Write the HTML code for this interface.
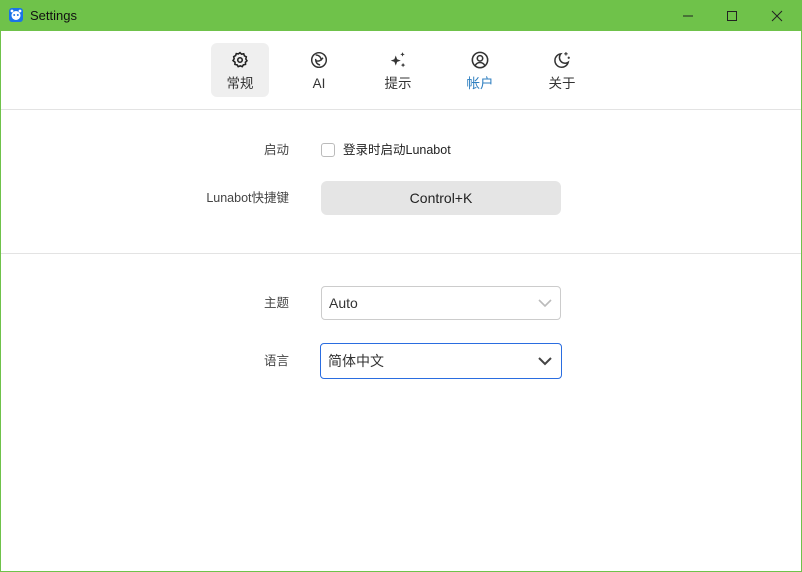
<!DOCTYPE html>
<html><head><meta charset="utf-8"><style>
*{margin:0;padding:0;box-sizing:border-box}
body{width:802px;height:572px;overflow:hidden;background:#6fc24a;font-family:"Liberation Sans","Noto Sans CJK SC",sans-serif;position:relative}
.win{position:absolute;left:1px;top:31px;width:800px;height:540px;background:#fff}
.title{position:absolute;left:30px;top:8px;font-size:13px;color:#111}
.abs{position:absolute}
.tab{position:absolute;top:43px;width:58px;height:54px;text-align:center;font-size:13.5px;color:#333}
.tab svg{position:absolute;left:50%;top:8px;margin-left:-9px}
.tab span{position:absolute;left:0;right:0;top:32px;line-height:18px;height:18px}
.lbl{position:absolute;right:513px;font-size:12.5px;color:#444;line-height:14px}
.hr{position:absolute;left:1px;width:800px;height:1px;background:#e3e3e3}
</style></head><body>
<svg class="abs" style="left:9px;top:8px" width="14" height="14" viewBox="0 0 14 14"><rect width="14" height="14" rx="3" fill="#1a73e8"/><circle cx="7" cy="7.5" r="4.5" fill="#fff"/><circle cx="5.2" cy="7" r="1" fill="#1a73e8"/><circle cx="8.8" cy="7" r="1" fill="#1a73e8"/><circle cx="3" cy="3" r="1.4" fill="#fff"/><circle cx="11" cy="3" r="1.4" fill="#fff"/></svg>
<div class="title">Settings</div>
<svg class="abs" style="left:680px;top:10px" width="110" height="12"><line x1="3" y1="6" x2="13" y2="6" stroke="#222"/><rect x="47.5" y="1.5" width="9" height="9" fill="none" stroke="#222"/><path d="M92 1L102 11M102 1L92 11" stroke="#222"/></svg>
<div class="win"></div>
<div class="tab" style="left:211px;background:#efefef;border-radius:6px"><svg width="18" height="18" viewBox="0 0 16 16" fill="none" stroke="#222" stroke-width="1.4"><path d="M8 1.5l1.4 1.3 1.9-.3.6 1.8 1.7.9-.4 1.9 1 1.6-1.4 1.3.1 1.9-1.9.4-1 1.6-1.8-.7-1.8.7-1-1.6-1.9-.4.1-1.9L1.8 8.5l1-1.6-.4-1.9 1.7-.9.6-1.8 1.9.3z"/><circle cx="8" cy="8" r="2"/></svg><span>常规</span></div>
<div class="tab" style="left:290px"><svg width="18" height="18" viewBox="0 0 16 16" fill="none" stroke="#333" stroke-width="1.3"><circle cx="8" cy="8" r="6.5"/><path d="M5 3.5c3 0 5 2 5 5M11.5 6c-1.5 2.5-4 3.5-6.5 2.5M9 12.5C6.5 12 5 10 5 7"/></svg><span>AI</span></div>
<div class="tab" style="left:369px"><svg width="18" height="18" viewBox="0 0 16 16" fill="#333"><path d="M6 4l1.2 3.3L10.5 8.5 7.2 9.7 6 13 4.8 9.7 1.5 8.5 4.8 7.3z"/><path d="M12 1l.6 1.4L14 3l-1.4.6L12 5l-.6-1.4L10 3l1.4-.6zM12.5 10.5l.6 1.4 1.4.6-1.4.6-.6 1.4-.6-1.4-1.4-.6 1.4-.6z"/></svg><span>提示</span></div>
<div class="tab" style="left:451px"><svg width="18" height="18" viewBox="0 0 16 16" fill="none" stroke="#333" stroke-width="1.4"><circle cx="8" cy="8" r="6.8"/><circle cx="8" cy="6.5" r="2.4"/><path d="M3.8 12.8c1-1.8 2.5-2.6 4.2-2.6s3.2.8 4.2 2.6"/></svg><span style="color:#2f7fc0">帐户</span></div>
<div class="tab" style="left:533px"><svg width="18" height="18" viewBox="0 0 16 16" fill="none" stroke="#333" stroke-width="1.3"><path d="M7 2.5A6 6 0 1 0 13.5 10 5 5 0 0 1 7 2.5z"/><path d="M11.5 1v3M10 2.5h3M14 5v2M13 6h2" stroke-width="1"/></svg><span>关于</span></div>
<div class="hr" style="top:109px"></div>
<div class="hr" style="top:253px"></div>
<div class="lbl" style="top:143px">启动</div>
<div class="abs" style="left:321px;top:143px;width:14px;height:14px;border:1px solid #bbb;border-radius:3px"></div>
<div class="abs" style="left:343px;top:142px;font-size:12.5px;color:#222;line-height:16px">登录时启动Lunabot</div>
<div class="lbl" style="top:191px">Lunabot快捷键</div>
<div class="abs" style="left:321px;top:181px;width:240px;height:34px;background:#e5e5e5;border-radius:6px;text-align:center;line-height:34px;font-size:14px;color:#222">Control+K</div>
<div class="lbl" style="top:296px">主题</div>
<div class="abs" style="left:321px;top:286px;width:240px;height:34px;border:1px solid #ccc;border-radius:4px;font-size:14px;color:#333;line-height:32px;padding-left:7px">Auto<svg class="abs" style="right:8px;top:12px" width="14" height="9"><path d="M1 1l6 6 6-6" fill="none" stroke="#bbb" stroke-width="1.6"/></svg></div>
<div class="lbl" style="top:354px">语言</div>
<div class="abs" style="left:320px;top:343px;width:242px;height:36px;border:1px solid #2a6de0;border-radius:4px;font-size:14px;color:#333;line-height:34px;padding-left:7px">简体中文<svg class="abs" style="right:9px;top:13px" width="14" height="9"><path d="M1 1l6 6 6-6" fill="none" stroke="#444" stroke-width="2"/></svg></div>
</body></html>
